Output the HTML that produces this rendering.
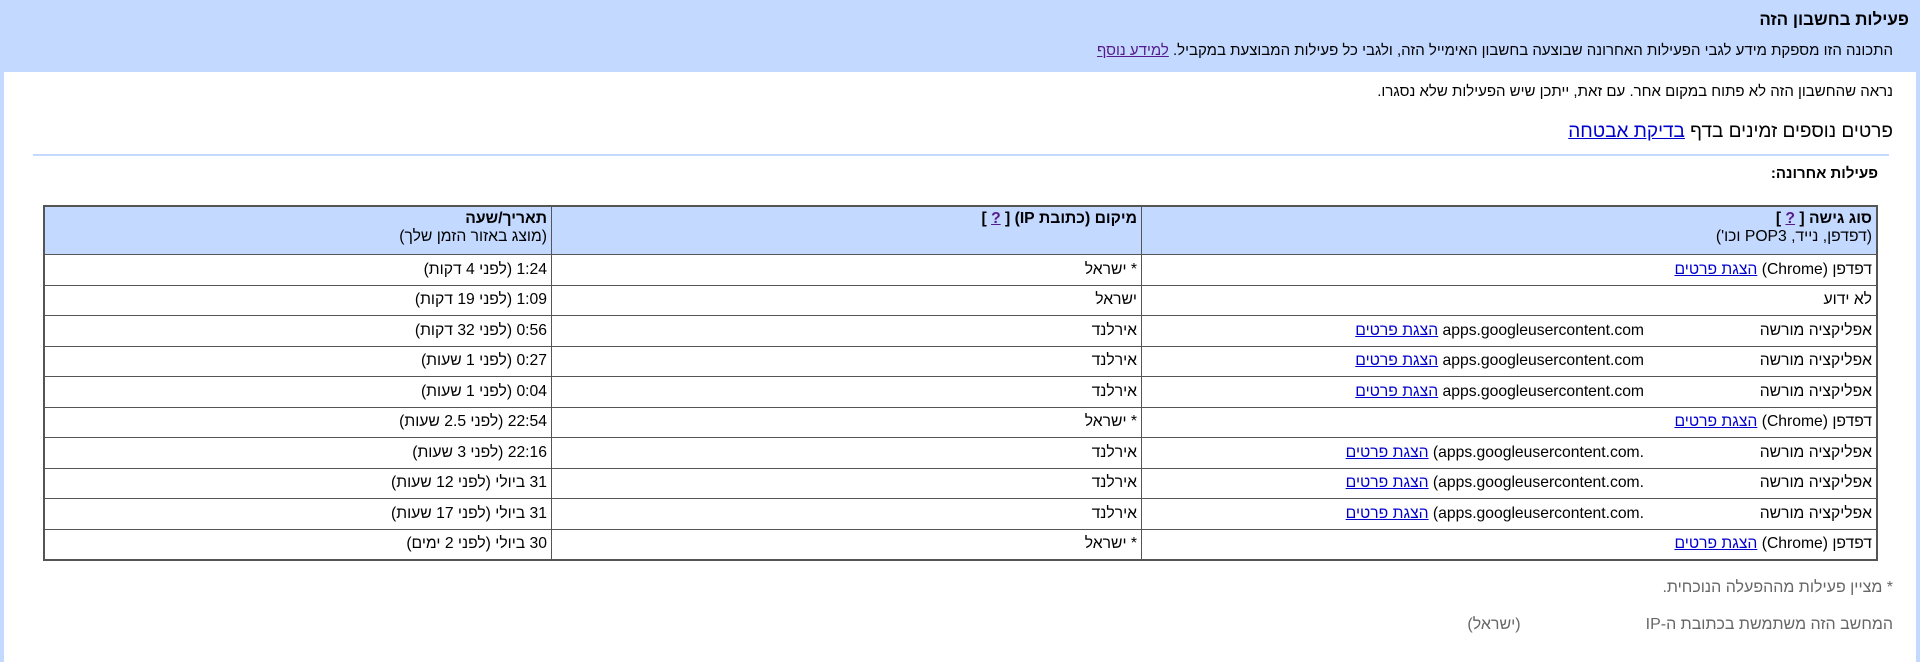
<!DOCTYPE html>
<html dir="rtl"><head><meta charset="utf-8">
<style>
html,body{margin:0;padding:0;}
body{width:1920px;height:649px;overflow:hidden;background:#c3d9ff;font-family:"Liberation Sans","Noto Sans CJK SC",sans-serif;color:#000;position:relative;}
#frame{position:absolute;left:4px;top:2px;width:1912px;height:660px;background:#fff;}
#hdr{position:absolute;left:0;top:0;width:1912px;height:70px;background:#c3d9ff;}
.abs{position:absolute;right:0;white-space:nowrap;}
a{color:#00c;}
a.v{color:#551a8b;}
table{position:absolute;left:39px;top:203px;width:1835px;border-collapse:collapse;border:2px solid #555;font-size:15.7px;}
td,th{border:1px solid #555;height:29.5px;padding:0 4px;text-align:right;vertical-align:middle;white-space:nowrap;}
th{background:#c3d9ff;height:44px;font-weight:normal;vertical-align:top;padding-top:3px;line-height:18px;}
.a1{display:inline-block;width:228px;}
</style></head><body>
<div id="frame">
 <div id="hdr">
  <div class="abs" style="right:7px;top:8px;font-size:17px;font-weight:bold;">פעילות בחשבון הזה</div>
  <div class="abs" style="right:23px;top:40px;font-size:15px;">התכונה הזו מספקת מידע לגבי הפעילות האחרונה שבוצעה בחשבון האימייל הזה, ולגבי כל פעילות המבוצעת במקביל. <a class="v" href="#">למידע נוסף</a></div>
 </div>
 <div class="abs" style="right:23px;top:81px;font-size:15px;">נראה שהחשבון הזה לא פתוח במקום אחר. עם זאת, ייתכן שיש הפעילות שלא נסגרו.</div>
 <div class="abs" style="right:23px;top:119px;font-size:19px;">פרטים נוספים זמינים בדף <a href="#">בדיקת אבטחה</a></div>
 <div style="position:absolute;left:29px;top:152px;width:1856px;height:2px;background:#c3d9ff;"></div>
 <div class="abs" style="right:38px;top:163px;font-size:15px;font-weight:bold;">פעילות אחרונה:</div>
 <table>
  <tr><th style="width:726px"><b>סוג גישה [ <a class="v" href="#">?</a> ]</b><br>(דפדפן, נייד, POP3 וכו')</th><th style="width:581px"><b>מיקום (כתובת IP) [ <a class="v" href="#">?</a> ]</b></th><th><b>תאריך/שעה</b><br>(מוצג באזור הזמן שלך)</th></tr>
  <tr><td>דפדפן (Chrome) <a href="#">הצגת פרטים</a></td><td>* ישראל</td><td>1:24 (לפני 4 דקות)</td></tr>
  <tr><td>לא ידוע</td><td>ישראל</td><td>1:09 (לפני 19 דקות)</td></tr>
  <tr><td><span class="a1">אפליקציה מורשה</span>apps.googleusercontent.com <a href="#">הצגת פרטים</a></td><td>אירלנד</td><td>0:56 (לפני 32 דקות)</td></tr>
  <tr><td><span class="a1">אפליקציה מורשה</span>apps.googleusercontent.com <a href="#">הצגת פרטים</a></td><td>אירלנד</td><td>0:27 (לפני 1 שעות)</td></tr>
  <tr><td><span class="a1">אפליקציה מורשה</span>apps.googleusercontent.com <a href="#">הצגת פרטים</a></td><td>אירלנד</td><td>0:04 (לפני 1 שעות)</td></tr>
  <tr><td>דפדפן (Chrome) <a href="#">הצגת פרטים</a></td><td>* ישראל</td><td>22:54 (לפני 2.5 שעות)</td></tr>
  <tr><td><span class="a1">אפליקציה מורשה</span>.apps.googleusercontent.com) <a href="#">הצגת פרטים</a></td><td>אירלנד</td><td>22:16 (לפני 3 שעות)</td></tr>
  <tr><td><span class="a1">אפליקציה מורשה</span>.apps.googleusercontent.com) <a href="#">הצגת פרטים</a></td><td>אירלנד</td><td>31 ביולי (לפני 12 שעות)</td></tr>
  <tr><td><span class="a1">אפליקציה מורשה</span>.apps.googleusercontent.com) <a href="#">הצגת פרטים</a></td><td>אירלנד</td><td>31 ביולי (לפני 17 שעות)</td></tr>
  <tr><td>דפדפן (Chrome) <a href="#">הצגת פרטים</a></td><td>* ישראל</td><td>30 ביולי (לפני 2 ימים)</td></tr>
 </table>
 <div class="abs" style="right:23px;top:577px;font-size:16px;color:#666;">* מציין פעילות מההפעלה הנוכחית.</div>
 <div class="abs" style="right:23px;top:614px;font-size:16px;color:#666;">המחשב הזה משתמשת בכתובת ה-IP<span style="display:inline-block;width:125px;"></span>(ישראל)</div>
</div>
</body></html>
